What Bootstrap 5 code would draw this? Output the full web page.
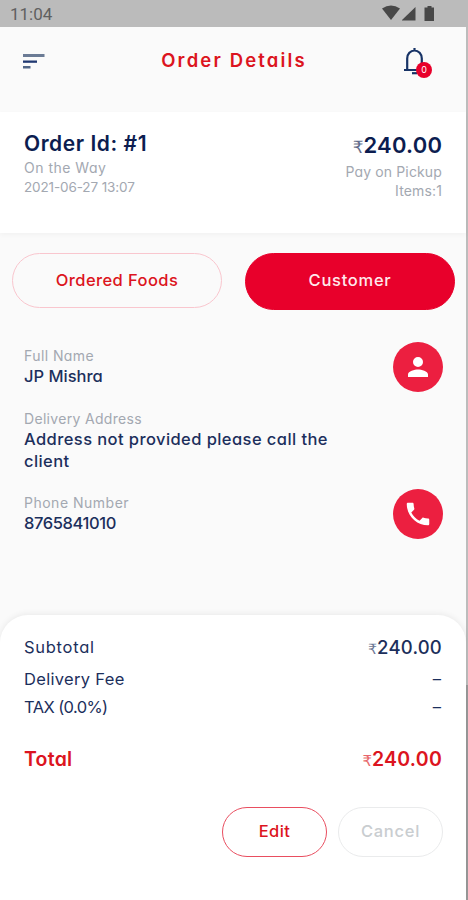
<!DOCTYPE html>
<html lang="en">
<head>
<meta charset="utf-8">
<meta name="viewport" content="width=device-width, initial-scale=1">
<title>Order Details</title>
<link href="https://cdn.jsdelivr.net/npm/bootstrap@5.3.0/dist/css/bootstrap.min.css" rel="stylesheet">
<style>
:root{--navy:#1c2f5c;--deep:#0c1d50;--brand:#e8002b;--ink-red:#dc1420;--muted-ink:#a3a8b1}
body{font-family:Inter,"Open Sans",sans-serif;font-feature-settings:"cv11";background:#fafafa;color:var(--navy);overflow:hidden}
.screen{width:468px;height:900px;border-right:2px solid #bcbcbc;border-image:linear-gradient(#bcbcbc 76%,#999 76%) 1}
.statusbar{height:27px;background:#bbb;color:#606060;font:17px/27px Roboto,sans-serif;padding:1px 31px 0 10px;margin-right:-2px}
.topbar{height:85px;padding:0 34px 0 23px}
.menu-icon{margin-top:-17px}
.topbar-title{font-size:18.5px;line-height:28px;font-weight:600;letter-spacing:2.15px;color:var(--ink-red);margin:-19px 0 0 21px}
.bell-wrap{width:30px;height:34px;margin-top:-14px}
.count-dot{right:0;bottom:2px;width:16px;height:16px;font-size:9px;line-height:16px;background:var(--brand)}
.summary{height:121px;padding:18px 24px 0;box-shadow:0 2px 5px rgba(0,0,0,.035)}
.order-id{font-size:21px;line-height:28px;font-weight:600;letter-spacing:.55px;color:var(--deep)}
.price-lg{font-size:22px;line-height:28px;padding-top:1px;font-weight:600;color:var(--deep);letter-spacing:.25px;margin-right:-.25px}
.rupee{display:inline-block;font-family:"DejaVu Sans",sans-serif;font-weight:400;font-size:.77em;letter-spacing:0;opacity:.65;line-height:1}
.meta{font-size:14px;line-height:19px;color:var(--muted-ink)}
.meta-date{font-size:13.5px;letter-spacing:-.12px;padding-top:1px}
.pay-meta{margin-top:3px}
.ls-n3{letter-spacing:-.6px}.ls-0{letter-spacing:0}.ls-n1{letter-spacing:-.4px}.ls-1{letter-spacing:.14px}.ls-3{letter-spacing:.32px}.ls-4{letter-spacing:.42px}.ls-5{letter-spacing:.5px}.ls-7{letter-spacing:.72px}
.tabs-row{padding:20px 11px 0 12px}
.tab-pill{width:210px;height:55px;border:1px solid #f9c6ce;color:var(--ink-red);font-size:16.5px;font-weight:500;padding:0 0 1px}
.tab-pill.active-pill{height:57px;background:var(--brand);border-color:var(--brand);color:#ffe9ec;padding-bottom:3px}
.details{height:305px;padding:36px 23px 0 24px}
.field-name{font-size:14px;line-height:19px;color:var(--muted-ink)}
.field-value{font-size:16.5px;line-height:22px;font-weight:500}
.next-field{margin-top:21.5px}
.side-actions{gap:97px;margin-top:-4px}
.round-btn{width:50px;height:50px;background:#ec1f40;color:#fff;padding:0;border:0}
.sheet{height:285px;border-radius:28px 28px 0 0;padding:18px 24px 0;box-shadow:0 -1px 6px rgba(0,0,0,.07)}
.sum-row{font-size:16.5px;line-height:28px;height:28px}
.sum-row.first-row{height:32px;line-height:28px;margin-bottom:-4px}
.sum-price{font-size:18.5px;font-weight:500;letter-spacing:.2px}
.dash{padding-right:1px}
.total-row{font-size:19.5px;line-height:28px;height:28px;font-weight:600;color:var(--ink-red);margin-top:24px;letter-spacing:.25px}
.actions{margin:34px -1px 0 0;gap:11px}
.action-btn{width:105px;height:50px;border:1px solid #e94e60;font-size:16.5px;font-weight:500;color:var(--ink-red);padding:0 0 2px}
.action-btn.muted-btn{border-color:#eaebec;color:#c9cdd0}
</style>
</head>
<body>
<div class="screen d-flex flex-column">
  <div class="statusbar d-flex justify-content-between">
    <span class="clock">11:04</span>
    <svg width="56" height="26" viewBox="0 0 56 26" fill="#484848"><path d="M1 7.500q9-6 18 0L10 19z"/><path d="M21 19.500V19L34.500 6v13.500z"/><path d="M43.500 6.500h3V5h4v1.500h2.500v13.500h-9.500z"/></svg>
  </div>
  <header class="topbar d-flex align-items-center justify-content-between">
    <svg class="menu-icon" width="22" height="15" viewBox="0 0 22 15"><path fill="#6b7b95" d="M0 0h21.500v3H0z"/><path fill="#203871" d="M0 6.500h14v2.300H0z"/><path fill="#526687" d="M0 12h7.500v2.500H0z"/></svg>
    <h1 class="topbar-title">Order Details</h1>
    <div class="bell-wrap position-relative">
      <svg class="d-block" width="30" height="34" viewBox="0 0 30 34" fill="none" stroke="#173366" stroke-width="2.200"><path d="M2 24h21M5.200 24V12.500a7.300 8 0 0 1 14.600 0V24M12.500 5V2"/><path d="M10 27.200h5"/></svg>
      <span class="count-dot position-absolute rounded-circle text-white text-center">0</span>
    </div>
  </header>
  <section class="summary bg-white d-flex justify-content-between">
    <div>
      <div class="order-id">Order Id: #1</div>
      <div class="meta ls-5">On the Way</div>
      <div class="meta meta-date">2021-06-27 13:07</div>
    </div>
    <div class="text-end">
      <div class="price-lg"><span class="rupee">₹</span>240.00</div>
      <div class="meta pay-meta ls-1">Pay on Pickup</div>
      <div class="meta ls-1">Items:1</div>
    </div>
  </section>
  <nav class="tabs-row d-flex justify-content-between align-items-start">
    <button class="btn rounded-pill tab-pill ls-4">Ordered Foods</button>
    <button class="btn rounded-pill tab-pill active-pill ls-7">Customer</button>
  </nav>
  <main class="details d-flex justify-content-between">
    <div>
      <div class="field-name ls-4">Full Name</div>
      <div class="field-value ls-0">JP Mishra</div>
      <div class="field-name ls-3 next-field">Delivery Address</div>
      <div class="field-value ls-4">Address not provided please call the<br>client</div>
      <div class="field-name ls-5 next-field">Phone Number</div>
      <div class="field-value ls-n1">8765841010</div>
    </div>
    <div class="side-actions d-flex flex-column">
      <button class="btn rounded-circle round-btn" aria-label="Profile"><svg width="30" height="30" viewBox="0 0 24 24" fill="currentColor"><path d="M12 12a4 4 0 1 0 0-8 4 4 0 0 0 0 8zm0 2c-2.700 0-8 1.300-8 4v2h16v-2c0-2.700-5.300-4-8-4z"/></svg></button>
      <button class="btn rounded-circle round-btn" aria-label="Call"><svg width="30" height="30" viewBox="0 0 24 24" fill="currentColor"><path d="M6.620 10.790c1.440 2.830 3.760 5.140 6.590 6.590l2.200-2.200c.270-.270.670-.360 1.020-.240 1.120.370 2.330.570 3.570.570.550 0 1 .450 1 1V20c0 .550-.450 1-1 1-9.390 0-17-7.610-17-17 0-.550.450-1 1-1h3.500c.550 0 1 .450 1 1 0 1.250.200 2.450.570 3.570.110.350.030.740-.250 1.020l-2.200 2.200z"/></svg></button>
    </div>
  </main>
  <section class="sheet bg-white">
    <div class="sum-row first-row d-flex justify-content-between"><span class="ls-7">Subtotal</span><span class="sum-price"><span class="rupee">₹</span>240.00</span></div>
    <div class="sum-row mt-1 d-flex justify-content-between"><span class="ls-3">Delivery Fee</span><span class="dash">–</span></div>
    <div class="sum-row d-flex justify-content-between"><span class="ls-n3">TAX (0.0%)</span><span class="dash">–</span></div>
    <div class="total-row d-flex justify-content-between"><span>Total</span><span><span class="rupee">₹</span>240.00</span></div>
    <div class="actions d-flex justify-content-end">
      <button class="btn rounded-pill action-btn ls-4">Edit</button>
      <button class="btn rounded-pill action-btn muted-btn ls-7">Cancel</button>
    </div>
  </section>
</div>
<script src="https://cdn.jsdelivr.net/npm/bootstrap@5.3.0/dist/js/bootstrap.bundle.min.js"></script>
</body>
</html>
